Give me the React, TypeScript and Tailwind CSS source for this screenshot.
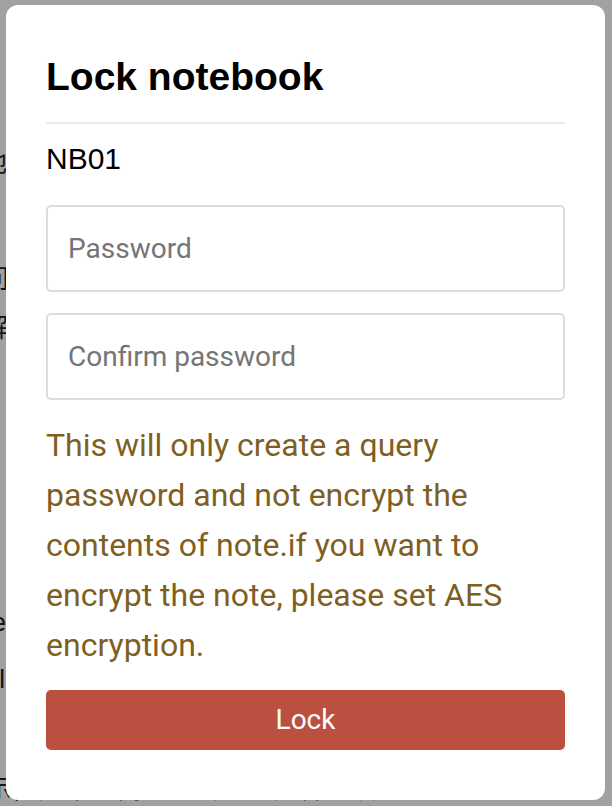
export default function App() {
  return (
    <div className="relative w-[612px] h-[806px] overflow-hidden bg-white font-['Roboto',sans-serif]">
      {/* page behind the dialog */}
      <div className="flex flex-col text-[26px] leading-none text-[#222] font-['Noto_Sans_CJK_SC','Roboto',sans-serif] whitespace-nowrap">
        <p className="mt-[148px] -ml-[19px]">地如何使用笔记本</p>
        <p className="mt-[90px] -ml-[17px]">问题反馈</p>
        <p className="mt-[23px] -ml-[18px]">解锁笔记</p>
        <p className="mt-[270px] -ml-[8px] font-['Roboto',sans-serif]">ence</p>
        <p className="mt-[31px] -ml-[1px] font-['Roboto',sans-serif]">lock</p>
        <p className="mt-[82px] -ml-[14px]">示，如果你需要加密笔记内容请设置</p>
      </div>

      {/* overlay */}
      <div className="absolute inset-0 bg-black/[0.37]" />

      {/* dialog */}
      <div className="absolute left-[6px] top-[5px] w-[599px] h-[795px] bg-white rounded-[12px] px-10 pt-[46px] flex flex-col">
        <h2 className="font-['Liberation_Sans',sans-serif] font-bold text-[39px] leading-[52px] text-black">
          Lock notebook
        </h2>
        <div className="mt-[19px] h-[2px] bg-[#ebebeb]" />
        <div className="mt-[18px] font-['Liberation_Sans',sans-serif] text-[30px] leading-[34px] text-black">NB01</div>
        <input
          type="password"
          placeholder="Password"
          className="mt-[29px] h-[87px] w-full rounded-[5px] border-2 border-[#dcdcdc] px-[20px] text-[28px] placeholder:text-[#757575] outline-none"
        />
        <input
          type="password"
          placeholder="Confirm password"
          className="mt-[21px] h-[87px] w-full rounded-[5px] border-2 border-[#dcdcdc] px-[20px] text-[28px] placeholder:text-[#757575] outline-none"
        />
        <p className="mt-[20px] text-[32px] leading-[50px] text-[#7f5f1f]">
          This will only create a query password and not encrypt the contents of note.if you want to encrypt the note, please set AES encryption.
        </p>
        <button className="mt-[20px] h-[60px] w-full rounded-[5px] bg-[#bb4f40] text-white text-[28px]">Lock</button>
      </div>
    </div>
  )
}
